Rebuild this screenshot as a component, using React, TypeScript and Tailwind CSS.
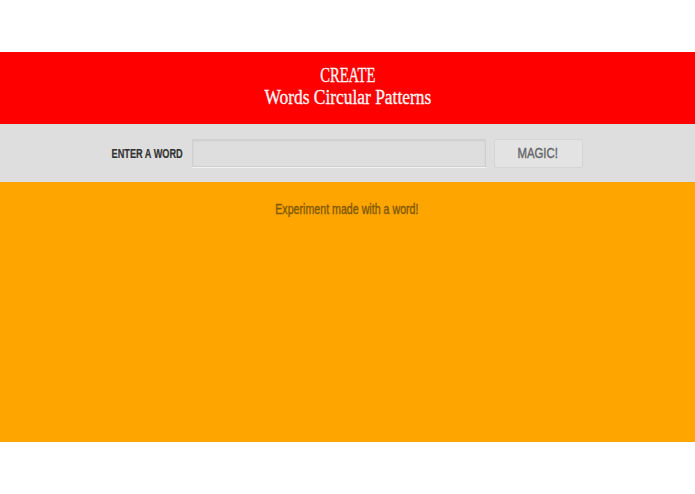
import React from "react";

export default function App() {
  return (
    <div className="w-[695px] h-[494px] bg-white flex flex-col" style={{ fontFamily: '"Liberation Sans", Arial, sans-serif' }}>
      <div className="h-[52px] bg-white" />
      <header className="h-[72px] bg-[#ff0000] flex flex-col items-center pt-[11.5px] text-[#fff5f5] text-[20px] leading-[22px] [-webkit-text-stroke:0.35px_#fff5f5]" style={{ fontFamily: '"Liberation Serif", "Times New Roman", serif' }}>
        <span className="inline-block whitespace-nowrap scale-x-[0.73]">CREATE</span>
        <span className="inline-block whitespace-nowrap scale-x-[0.87]">Words Circular Patterns</span>
      </header>
      <div className="h-[58px] bg-[#dedede] flex items-center justify-center pr-[1px]">
        <div className="w-[71px] flex justify-end pt-[2px]">
          <span className="shrink-0 inline-block whitespace-nowrap font-bold text-[13.5px] text-[#333333] scale-x-[0.68] origin-right [-webkit-text-stroke:0.2px_#333333]">ENTER A WORD</span>
        </div>
        <input
          type="text"
          className="ml-[9px] w-[294px] h-[28px] bg-[#dedede] border border-[#cfcfcf] shadow-[inset_0_1px_2px_rgba(0,0,0,0.08),0_1px_0_rgba(255,255,255,0.6)] outline-none"
        />
        <button className="ml-[8px] w-[89px] h-[29px] bg-[#e3e3e3] border border-[#d4d4d4] rounded-[2px] flex items-center justify-center">
          <span className="inline-block whitespace-nowrap text-[15px] text-[#666666] scale-x-[0.76] [-webkit-text-stroke:0.4px_#666666]">MAGIC!</span>
        </button>
      </div>
      <main className="h-[260px] bg-[#ffa500] flex justify-center pt-[17px] pr-[2px]">
        <span className="inline-block h-[20px] whitespace-nowrap text-[15px] leading-[20px] text-[#7f5a00] scale-x-[0.71] [-webkit-text-stroke:0.4px_#7f5a00]">Experiment made with a word!</span>
      </main>
      <div className="h-[52px] bg-white" />
    </div>
  );
}
